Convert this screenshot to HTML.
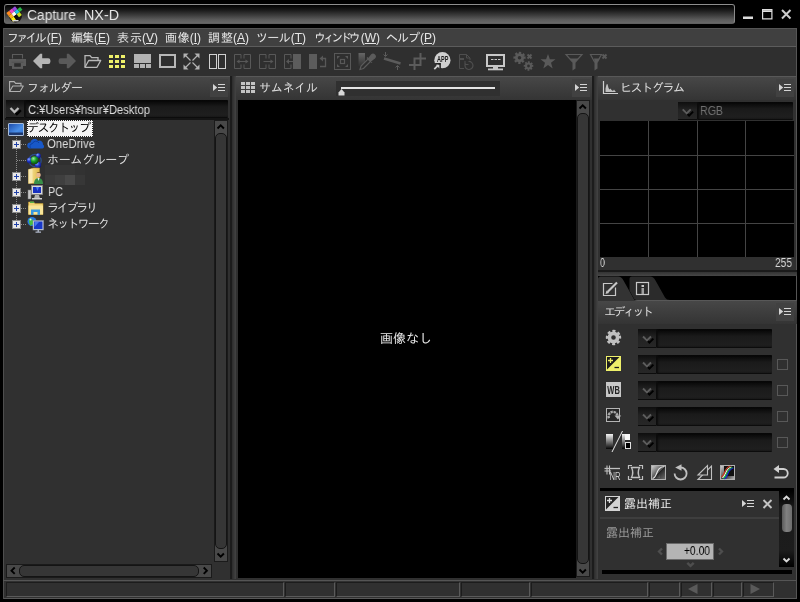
<!DOCTYPE html>
<html lang="ja"><head><meta charset="utf-8"><title>Capture NX-D</title>
<style>
*{box-sizing:border-box;margin:0;padding:0}
html,body{width:800px;height:602px;overflow:hidden;background:#000}
body{position:relative;font-family:"Liberation Sans","IPAGothic","Noto Sans CJK JP",sans-serif;font-size:12px;color:#dcdcdc;line-height:12px}
.a{position:absolute}
.t{position:absolute;white-space:nowrap;will-change:transform}
.j{letter-spacing:-2px}
u{text-decoration:underline;text-underline-offset:1px}
#title{left:4px;top:4px;width:731px;height:20px;border-radius:3px;border:1px solid #606060;border-top-color:#8e8e8e;border-left-color:#707070;border-right-color:#8a8a8a;background:linear-gradient(#000 0%,#161616 25%,#3a3a3a 55%,#5a5a5a 80%,#686868 100%)}
#menubar{left:3px;top:28px;width:794px;height:19px;background:#404040;border-top:1px solid #555;border-bottom:1px solid #5c5c5c}
#toolbar{left:3px;top:47px;width:794px;height:29px;background:#2f2f2f}
.hdr{background:linear-gradient(#474747 0%,#343434 100%);border-top:1px solid #585858}
.panel{background:#303030}
.mbtn{width:18px;height:18px;background:#414141}
.combo{background:linear-gradient(#040404 0%,#1a1a1a 40%,#202020 100%);border-radius:1px;border-bottom:1px solid #0c0c0c;box-shadow:inset 2px 0 2px #0c0c0c}
.chev{background:linear-gradient(#0e0e0e 0%,#222 45%,#272727 100%);border-bottom:1px solid #0c0c0c}
.sbv{width:14px;background:#2c2c2c;border:1px solid #1a1a1a}
.sbv i,.sbh i{position:absolute;display:block}
.sbv .up,.sbv .dn{left:0;width:12px;height:17px;background:#484848}
.sbv .up{top:0}.sbv .dn{bottom:0}
.sbv .th{left:0;width:12px;border:1px solid #141414;border-radius:5px;background:#363636}
.sbh{height:14px;background:#2c2c2c;border:1px solid #1a1a1a}
.sbh .lf,.sbh .rt{top:0;height:12px;width:17px;background:#484848}
.sbh .lf{left:0}.sbh .rt{right:0}
.sbh .th{top:0;height:12px;border:1px solid #141414;border-radius:5px;background:#363636}
.cb{width:11px;height:11px;border:1px solid #585858}
.sc{top:582px;height:15px;background:#303030;border-left:1px solid #1c1c1c;border-top:1px solid #1c1c1c;border-bottom:1px solid #5a5a5a;border-right:1px solid #5a5a5a}
</style></head><body>
<!-- TITLE -->
<div class="a" id="title"></div>
<!-- MENU -->
<div class="a" id="menubar"></div>
<!-- TOOLBAR -->
<div class="a" id="toolbar"></div>
<!-- LEFT PANEL -->
<div class="a panel" style="left:3px;top:76px;width:227px;height:503px"></div>
<div class="a hdr" style="left:3px;top:76px;width:227px;height:24px"></div>
<div class="a mbtn" style="left:210px;top:79px"></div>
<!-- splitter L -->
<div class="a" style="left:230px;top:76px;width:6px;height:503px;background:linear-gradient(90deg,#1c1c1c 0,#1c1c1c 2px,#2c2c2c 2px,#444 100%)"></div>
<!-- CENTER PANEL -->
<div class="a panel" style="left:236px;top:76px;width:356px;height:503px"></div>
<div class="a hdr" style="left:236px;top:76px;width:356px;height:24px"></div>
<div class="a mbtn" style="left:572px;top:79px"></div>
<div class="a" style="left:238px;top:100px;width:338px;height:478px;background:#000"></div>
<!-- splitter R -->
<div class="a" style="left:592px;top:76px;width:6px;height:503px;background:linear-gradient(90deg,#1c1c1c 0,#1c1c1c 2px,#2c2c2c 2px,#444 100%)"></div>
<!-- RIGHT PANEL -->
<div class="a panel" style="left:598px;top:76px;width:199px;height:503px"></div>
<div class="a hdr" style="left:598px;top:76px;width:199px;height:24px"></div>
<div class="a mbtn" style="left:776px;top:79px"></div>
<!-- STATUS -->
<div class="a" id="status" style="left:3px;top:579px;width:794px;height:20px;background:#303030;border-bottom:1px solid #585858"></div>
<div class="a" style="left:3px;top:28px;width:1px;height:571px;background:#4e4e4e"></div>
<div class="a" style="left:796px;top:28px;width:1px;height:571px;background:#555"></div>
<!-- LEFT CONTENT -->
<div class="a" style="left:5px;top:118px;width:224px;height:2px;background:#151515"></div>
<div class="a chev" style="left:6px;top:100px;width:18px;height:18px"></div>
<div class="a combo" style="left:24px;top:100px;width:204px;height:18px"></div>
<!-- selected item -->
<div class="a" style="left:27px;top:120px;width:66px;height:17px;background:#f4f4f4;border:1px dotted #222"></div>
<!-- blurred name -->
<div class="a" style="left:45px;top:165px;width:30px;height:10px;background:#353535"></div>
<div class="a" style="left:75px;top:165px;width:10px;height:10px;background:#323232"></div>
<div class="a" style="left:45px;top:175px;width:10px;height:10px;background:#3a3a3a"></div>
<div class="a" style="left:55px;top:175px;width:10px;height:10px;background:#3f3f3f"></div>
<div class="a" style="left:65px;top:175px;width:10px;height:10px;background:#484848"></div>
<div class="a" style="left:75px;top:175px;width:10px;height:10px;background:#373737"></div>
<!-- v scroll left -->
<div class="a sbv" style="left:214px;top:120px;height:442px"><i class="up"></i><i class="dn"></i><i class="th" style="top:12px;bottom:12px"></i></div>
<!-- h scroll left -->
<div class="a sbh" style="left:6px;top:564px;width:206px"><i class="lf"></i><i class="rt"></i><i class="th" style="left:12px;right:12px"></i></div>
<!-- CENTER CONTENT -->
<div class="a" style="left:336px;top:81px;width:164px;height:15px;background:#303030"></div>
<div class="a" style="left:341px;top:87px;width:154px;height:2px;background:#e4e4e4"></div>
<div class="a sbv" style="left:576px;top:100px;height:477px"><i class="up"></i><i class="dn"></i><i class="th" style="top:12px;bottom:12px"></i></div>
<!-- STATUS CELLS -->
<div class="a" style="left:3px;top:580px;width:794px;height:1px;background:#555"></div>
<div class="a sc" style="left:6px;width:278px"></div>
<div class="a sc" style="left:285px;width:50px"></div>
<div class="a sc" style="left:336px;width:124px"></div>
<div class="a sc" style="left:461px;width:69px"></div>
<div class="a sc" style="left:531px;width:117px"></div>
<div class="a sc" style="left:649px;width:31px"></div>
<div class="a sc" style="left:681px;width:31px"></div>
<div class="a sc" style="left:713px;width:29px"></div>
<div class="a sc" style="left:743px;width:31px"></div>
<!-- RIGHT CONTENT -->
<div class="a chev" style="left:678px;top:102px;width:19px;height:18px"></div>
<div class="a combo" style="left:697px;top:102px;width:96px;height:18px"></div>
<!-- histogram -->
<div class="a" style="left:600px;top:121px;width:194px;height:136px;background:#000"></div>
<div class="a" style="left:648px;top:121px;width:1px;height:136px;background:#444"></div>
<div class="a" style="left:697px;top:121px;width:1px;height:136px;background:#444"></div>
<div class="a" style="left:745px;top:121px;width:1px;height:136px;background:#444"></div>
<div class="a" style="left:600px;top:155px;width:194px;height:1px;background:#444"></div>
<div class="a" style="left:600px;top:189px;width:194px;height:1px;background:#444"></div>
<div class="a" style="left:600px;top:223px;width:194px;height:1px;background:#444"></div>
<!-- h-splitter -->
<div class="a" style="left:598px;top:270px;width:199px;height:6px;background:linear-gradient(#1a1a1a 0,#1a1a1a 33%,#333 34%,#464646 100%)"></div>
<!-- tab strip -->
<div class="a" style="left:598px;top:276px;width:198px;height:25px;background:#000"></div>
<!-- edit header -->
<div class="a hdr" style="left:598px;top:300px;width:199px;height:24px"></div>
<div class="a mbtn" style="left:776px;top:303px"></div>
<!-- edit rows -->
<div class="a chev" style="left:638px;width:18px;height:19px;top:329px"></div><div class="a combo" style="left:656px;top:329px;width:116px;height:19px"></div>
<div class="a chev" style="left:638px;width:18px;height:19px;top:355px"></div><div class="a combo" style="left:656px;top:355px;width:116px;height:19px"></div>
<div class="a chev" style="left:638px;width:18px;height:19px;top:381px"></div><div class="a combo" style="left:656px;top:381px;width:116px;height:19px"></div>
<div class="a chev" style="left:638px;width:18px;height:19px;top:407px"></div><div class="a combo" style="left:656px;top:407px;width:116px;height:19px"></div>
<div class="a chev" style="left:638px;width:18px;height:19px;top:433px"></div><div class="a combo" style="left:656px;top:433px;width:116px;height:19px"></div>
<div class="a cb" style="left:777px;top:359px"></div>
<div class="a cb" style="left:777px;top:385px"></div>
<div class="a cb" style="left:777px;top:411px"></div>
<div class="a cb" style="left:777px;top:437px"></div>
<!-- exposure panel -->
<div class="a" style="left:600px;top:488px;width:194px;height:3px;background:#000"></div>
<div class="a" style="left:600px;top:517px;width:179px;height:2px;background:#3e3e3e"></div>
<div class="a" style="left:779px;top:491px;width:15px;height:76px;background:linear-gradient(#000 0%,#1a1a1a 22%,#1c1c1c 78%,#000 100%)"></div>
<div class="a" style="left:782px;top:504px;width:10px;height:28px;border-radius:4px;background:linear-gradient(90deg,#5a5a5a,#808080 45%,#6e6e6e)"></div>
<div class="a" style="left:602px;top:570px;width:190px;height:4px;background:#000"></div>
<div class="a" style="left:666px;top:543px;width:48px;height:17px;background:#b4b4b4;border:1px solid #6a6a6a"></div>
<!-- TEXT -->
<div class="t" id="t0" style="left:27px;top:8px;font-size:14px;color:#e4e4e4;line-height:14px;transform:scaleX(0.984);transform-origin:0 0;">Capture</div>
<div class="t" id="t1" style="left:84px;top:8px;font-size:14px;color:#e4e4e4;line-height:14px;transform:scaleX(1.022);transform-origin:0 0;">NX-D</div>
<div class="t" id="t2" style="left:7px;top:32px;font-size:12px;color:#e6e6e6;line-height:12px;"><span style="letter-spacing:-2.78px">ファイ</span>ル(<u>F</u>)</div>
<div class="t" id="t3" style="left:71px;top:32px;font-size:12px;color:#e6e6e6;line-height:12px;"><span style="letter-spacing:-1.02px">編</span>集(<u>E</u>)</div>
<div class="t" id="t4" style="left:117px;top:32px;font-size:12px;color:#e6e6e6;line-height:12px;"><span style="letter-spacing:0.98px">表</span>示(<u>V</u>)</div>
<div class="t" id="t5" style="left:165px;top:32px;font-size:12px;color:#e6e6e6;line-height:12px;"><span style="letter-spacing:0.66px">画</span>像(<u>I</u>)</div>
<div class="t" id="t6" style="left:208px;top:32px;font-size:12px;color:#e6e6e6;line-height:12px;"><span style="letter-spacing:0.98px">調</span>整(<u>A</u>)</div>
<div class="t" id="t7" style="left:256px;top:32px;font-size:12px;color:#e6e6e6;line-height:12px;"><span style="letter-spacing:-0.67px">ツー</span>ル(<u>T</u>)</div>
<div class="t" id="t8" style="left:314px;top:32px;font-size:12px;color:#e6e6e6;line-height:12px;"><span style="letter-spacing:-3.33px">ウィンド</span>ウ(<u>W</u>)</div>
<div class="t" id="t9" style="left:386px;top:32px;font-size:12px;color:#e6e6e6;line-height:12px;"><span style="letter-spacing:-1.01px">ヘル</span>プ(<u>P</u>)</div>
<div class="t" id="t10" style="left:27px;top:82px;font-size:12px;color:#dcdcdc;line-height:12px;"><span style="letter-spacing:-1.00px">フォルダ</span>ー</div>
<div class="t" id="t11" style="left:28px;top:103px;font-size:13px;color:#dcdcdc;line-height:13px;transform:scaleX(0.861);transform-origin:0 0;">C:¥Users¥hsur¥Desktop</div>
<div class="t" id="t12" style="left:27px;top:122px;font-size:12px;color:#000;line-height:12px;"><span style="letter-spacing:-1.60px">デスクトッ</span>プ</div>
<div class="t" id="t13" style="left:47px;top:137px;font-size:13px;color:#dcdcdc;line-height:13px;transform:scaleX(0.874);transform-origin:0 0;">OneDrive</div>
<div class="t" id="t14" style="left:47px;top:154px;font-size:12px;color:#dcdcdc;line-height:12px;"><span style="letter-spacing:-0.33px">ホームグルー</span>プ</div>
<div class="t" id="t15" style="left:48px;top:185px;font-size:13px;color:#dcdcdc;line-height:13px;transform:scaleX(0.830);transform-origin:0 0;">PC</div>
<div class="t" id="t16" style="left:47px;top:202px;font-size:12px;color:#dcdcdc;line-height:12px;"><span style="letter-spacing:-2.25px">ライブラ</span>リ</div>
<div class="t" id="t17" style="left:47px;top:218px;font-size:12px;color:#dcdcdc;line-height:12px;"><span style="letter-spacing:-1.80px">ネットワー</span>ク</div>
<div class="t" id="t18" style="left:259px;top:82px;font-size:12px;color:#dcdcdc;line-height:12px;"><span style="letter-spacing:-0.25px">サムネイ</span>ル</div>
<div class="t" id="t19" style="left:380px;top:332px;font-size:13px;color:#e8e8e8;line-height:13px;"><span style="letter-spacing:0.00px">画像な</span>し</div>
<div class="t" id="t20" style="left:620px;top:82px;font-size:12px;color:#dcdcdc;line-height:12px;"><span style="letter-spacing:-1.40px">ヒストグラ</span>ム</div>
<div class="t" id="t21" style="left:700px;top:104px;font-size:13px;color:#707070;line-height:13px;transform:scaleX(0.816);transform-origin:0 0;">RGB</div>
<div class="t" id="t22" style="left:600px;top:256px;font-size:13px;color:#d8d8d8;line-height:13px;transform:scaleX(0.691);transform-origin:0 0;">0</div>
<div class="t" id="t23" style="left:775px;top:256px;font-size:13px;color:#d8d8d8;line-height:13px;transform:scaleX(0.783);transform-origin:0 0;">255</div>
<div class="t" id="t24" style="left:604px;top:306px;font-size:12px;color:#dcdcdc;line-height:12px;"><span style="letter-spacing:-2.50px">エディッ</span>ト</div>
<div class="t" id="t25" style="left:624px;top:498px;font-size:12px;color:#e8e8e8;line-height:12px;"><span style="letter-spacing:0.00px">露出補</span>正</div>
<div class="t" id="t26" style="left:606px;top:527px;font-size:12px;color:#9a9a9a;line-height:12px;"><span style="letter-spacing:0.00px">露出補</span>正</div>
<div class="t" id="t27" style="left:684px;top:544px;font-size:13px;color:#000;line-height:13px;transform:scaleX(0.790);transform-origin:0 0;">+0.00</div>
<!-- ICON OVERLAY: toolbar -->
<svg class="a" style="left:0;top:0" width="800" height="602" viewBox="0 0 800 602">
<!-- app icon -->
<g>
<circle cx="15.5" cy="16" r="6.5" fill="#1a1413"/>
<g transform="translate(14.800,13.300) rotate(-38) scale(1.080)">
<rect x="-6" y="-5" width="3.4" height="3.4" fill="#ff8a1e"/><rect x="-2.6" y="-5" width="3.4" height="3.4" fill="#f048c8"/><rect x="0.8" y="-5" width="3.4" height="3.4" fill="#9a4ae0"/>
<rect x="-6" y="-1.6" width="3.4" height="3.4" fill="#ffb020"/><rect x="-2.6" y="-1.6" width="3.4" height="3.4" fill="#ffffff"/><rect x="0.8" y="-1.6" width="3.4" height="3.4" fill="#20c8e8"/>
<rect x="-6" y="1.8" width="3.4" height="3.4" fill="#f8f010"/><rect x="-2.6" y="1.8" width="3.4" height="3.4" fill="#101010"/><rect x="0.8" y="1.8" width="3.4" height="3.4" fill="#c8e020"/>
<rect x="4.2" y="-1.6" width="3.4" height="3.4" fill="#28b848"/>
</g>
<rect x="12.5" y="20" width="6" height="1.4" fill="#d8d8d8"/>
</g>
<!-- window controls -->
<rect x="743" y="16.500" width="10" height="2.500" fill="#dcdcdc"/>
<path d="M762,9h10.500v10.500h-10.500z M763.200,12v6.300h8.100v-6.300z" fill="#dcdcdc" fill-rule="evenodd"/><rect x="763" y="10.300" width="8.500" height="0.600" fill="#999"/>
<path d="M782,10l8.500,8.500M790.500,10l-8.500,8.500" stroke="#cccccc" stroke-width="2" fill="none"/>
<!-- printer -->
<path d="M12.500,58.500v-4h10v4" fill="none" stroke="#5c5c5c" stroke-width="1.100"/><rect x="9" y="59" width="17" height="7" fill="#5c5c5c"/><rect x="12" y="62.300" width="11" height="6.600" fill="#5c5c5c"/><rect x="11.500" y="61.800" width="12" height="0.600" fill="#4a4a4a"/><rect x="14.200" y="63.200" width="6.600" height="3.600" fill="#2c2c2c"/>
<!-- back / forward -->
<path d="M33,61l7.200,-7.300h2v4.500h6a2.200,2.200 0 0 1 2.200,2.200v1.300a2.200,2.200 0 0 1 -2.200,2.200h-6v4.400h-2z" fill="#b4b4b4"/>
<path d="M76,61l-7.200,-7.300h-2v4.500h-6a2.200,2.200 0 0 0 -2.200,2.200v1.300a2.200,2.200 0 0 0 2.200,2.200h6v4.400h2z" fill="#5a5a5a"/>
<!-- folder open -->
<path d="M85,67.300V55.700h5l1.700,2h6.300v3" fill="none" stroke="#b8b8b8" stroke-width="1.3"/>
<path d="M85,67.300l3.700,-6.800h12l-3.700,6.800z" fill="none" stroke="#b8b8b8" stroke-width="1.3" stroke-linejoin="round"/>
<!-- grid 3x3 -->
<g fill="#eef06a"><rect x="109" y="55" width="4" height="3"/><rect x="115" y="55" width="4" height="3"/><rect x="121" y="55" width="4" height="3"/><rect x="109" y="60" width="4" height="3"/><rect x="115" y="60" width="4" height="3"/><rect x="121" y="60" width="4" height="3"/><rect x="109" y="65" width="4" height="3"/><rect x="115" y="65" width="4" height="3"/><rect x="121" y="65" width="4" height="3"/></g>
<!-- filmstrip -->
<g fill="#b2b2b2"><rect x="134" y="54" width="17" height="9"/><rect x="134" y="64" width="5" height="4"/><rect x="140" y="64" width="5" height="4"/><rect x="146" y="64" width="5" height="4"/></g>
<!-- single -->
<rect x="160" y="55" width="15" height="12" fill="none" stroke="#b8b8b8" stroke-width="2"/>
<!-- fullscreen -->
<g fill="#b2b2b2" stroke="#b2b2b2" stroke-width="1.2"><path d="M185.500,55.500l5,5M197.500,55.500l-5,5M185.500,67.500l5,-5M197.500,67.500l-5,-5" fill="none"/><path d="M183.500,53.500h5l-5,5z" stroke="none"/><path d="M199.500,53.500h-5l5,5z" stroke="none"/><path d="M183.500,69.500h5l-5,-5z" stroke="none"/><path d="M199.500,69.500h-5l5,-5z" stroke="none"/></g>
<!-- compare -->
<rect x="209.500" y="54.500" width="7" height="14" fill="none" stroke="#d0d0d0"/><rect x="218.500" y="54.500" width="7" height="14" fill="none" stroke="#d0d0d0"/>
<!-- disabled: 2 boxes w/ double arrow -->
<g fill="none" stroke="#585858" stroke-width="1"><path d="M241,54.500h-6.500v14h6.500v-4M241,54.500v4M244,54.500h6.500v14h-6.500v-4M244,54.500v4"/><path d="M237.500,61.500h10"/></g>
<path d="M236.500,61.500l3,-2v4zM248.500,61.500l-3,-2v4z" fill="#585858"/>
<g fill="none" stroke="#585858" stroke-width="1"><path d="M266,54.500h-6.500v14h6.500v-4M266,54.500v4M269,54.500h6.500v14h-6.500v-4M269,54.500v4"/><path d="M263.500,61.500h8"/></g>
<path d="M273.500,61.500l-3,-2v4z" fill="#585858"/>
<!-- arrow into filled -->
<path d="M291,54.500h-6.500v14h6.500v-4M291,54.500v4" fill="none" stroke="#585858"/><rect x="293" y="54" width="8" height="15" fill="#5c5c5c"/><path d="M287.500,61.500h6" stroke="#585858"/><path d="M286,61.500l3,-2.500v5z" fill="#585858"/>
<!-- filled + return arrow -->
<rect x="309" y="54" width="8" height="15" fill="#5c5c5c"/><path d="M320,66.500h5.500v-8h-3" fill="none" stroke="#585858" stroke-width="1.3"/><path d="M319.500,58.500l3.500,-3v6z" fill="#585858"/>
<!-- focus box -->
<rect x="334.500" y="53.500" width="16" height="16" fill="none" stroke="#585858"/><rect x="340.500" y="59.500" width="4" height="4" fill="none" stroke="#585858" stroke-width="1.2"/>
<path d="M337,59v-3h3zM348,59v-3h-3zM337,64v3h3zM348,64v3h-3z" fill="#585858"/>
<!-- eyedropper -->
<defs><linearGradient id="gd" x1="0" y1="0" x2="0" y2="1"><stop offset="0" stop-color="#666"/><stop offset="1" stop-color="#333"/></linearGradient></defs>
<rect x="358.500" y="53" width="6.500" height="13" fill="url(#gd)"/>
<path d="M360,69.500l1,-3.500l7,-7l2.500,2.500l-7,7z" fill="#2f2f2f" stroke="#5c5c5c" stroke-width="1.2"/><path d="M367,57.500l5,5M368.500,59l3,-4a2,2 0 0 1 3,3l-4,3z" fill="#5c5c5c" stroke="#5c5c5c" stroke-width="1.4"/>
<!-- straighten -->
<path d="M384,58.500l16.500,5" stroke="#5c5c5c" stroke-width="2.400" fill="none"/><path d="M385.500,52v4M383.500,54.500l2,2l2,-2M397.500,70v-4M395.500,67.500l2,-2l2,2" stroke="#5c5c5c" stroke-width="1" fill="none"/>
<!-- crop -->
<path d="M420.500,53V65H409M426,58.500H414.500V70" stroke="#5c5c5c" stroke-width="2" fill="none"/>
<!-- APP -->
<circle cx="442.400" cy="60.200" r="8.100" fill="#d0d0d0"/><rect x="433" y="63.200" width="7.600" height="8" fill="#2f2f2f"/><rect x="435.500" y="63.200" width="5.100" height="1.300" fill="#1a1a1a"/><rect x="439.300" y="63.200" width="1.300" height="5" fill="#1a1a1a"/>
<text x="437" y="62" font-family="Liberation Sans, sans-serif" font-weight="bold" font-size="8.400" fill="#1c1c1c" textLength="11.300" lengthAdjust="spacingAndGlyphs">APP</text>
<path d="M434.300,69.200l4,-4" stroke="#d0d0d0" stroke-width="1.700"/><path d="M435.800,64.800h3.600v3.600z" fill="#d0d0d0"/>
<!-- file revert -->
<path d="M464,68.500h-4.500v-14h7l3.500,3.500v2M466.500,54.500v3.500h3.500" fill="none" stroke="#4e4e4e"/><path d="M460,59h4" stroke="#4e4e4e" stroke-width="2"/><path d="M465.500,63.500a4,4 0 1 0 3,-2" fill="none" stroke="#4e4e4e" stroke-width="1.200"/><path d="M465,61v3.500h3.500" fill="none" stroke="#4e4e4e"/>
<!-- monitor -->
<rect x="487" y="55" width="17" height="11" fill="none" stroke="#c8c8c8" stroke-width="2"/><rect x="493" y="67" width="5" height="2" fill="#c8c8c8"/><rect x="488" y="68.500" width="15" height="1.800" fill="#c8c8c8"/><path d="M491,59.500h2.500M494.500,59.500h2.500M498,59.500h2.500" stroke="#c8c8c8" stroke-width="1"/>
<!-- gears -->
<g fill="none" stroke="#5a5a5a"><circle cx="519.500" cy="57.800" r="3.200" stroke-width="2.800"/><circle cx="519.500" cy="57.800" r="5" stroke-width="2.200" stroke-dasharray="2.200 1.727" transform="rotate(-14 519.500 57.800)"/><circle cx="528.500" cy="66" r="2.500" stroke-width="2.200"/><circle cx="528.500" cy="66" r="3.900" stroke-width="1.800" stroke-dasharray="1.700 1.363" transform="rotate(-14 528.500 66)"/><path d="M527.500,54.500l4,4M531.500,54.500l-4,4" stroke-width="2"/></g>
<!-- star -->
<path d="M548,54l1.900,5.300h5.600l-4.500,3.500l1.700,5.600l-4.700,-3.300l-4.700,3.300l1.700,-5.600l-4.500,-3.500h5.600z" fill="#5a5a5a"/>
<!-- filter -->
<path d="M566,54.500h16l-6.500,7.500h-3z" fill="none" stroke="#5a5a5a" stroke-width="1.200"/><path d="M569.500,58.500h9l-3,3.500v6.500l-3,2v-8.500z" fill="#5a5a5a"/>
<path d="M590.500,54.500h11l-2,3.500l-2,4h-3z" fill="none" stroke="#5a5a5a" stroke-width="1.200"/><path d="M594,58.500h6l-2.500,3.500v6.500l-3,2v-8.500z" fill="#5a5a5a"/><path d="M602.500,54.500l4,4M606.500,54.500l-4,4" stroke="#5a5a5a" stroke-width="2"/>
</svg>
<!-- ICON OVERLAY: panels -->
<svg class="a" style="left:0;top:0" width="800" height="602" viewBox="0 0 800 602">
<defs>
<g id="mi"><path d="M0,0l4.200,3.500l-4.200,3.500z"/><rect x="5" y="0" width="7" height="1"/><rect x="5" y="3" width="7" height="1"/><rect x="5" y="6" width="7" height="1"/></g>
<g id="cv"><path d="M0.500,0l4,4l4,-4" fill="none"/></g>
<g id="cvd" stroke-width="1.900"><use href="#cv" x="2.400" y="2.200" stroke="#000"/><use href="#cv" stroke="#5c5c5c"/></g>
<g id="cvl" stroke-width="2.300"><use href="#cv" x="2.400" y="2.200" stroke="#000"/><use href="#cv" stroke="#b8b8b8"/></g>
<g id="ex"><rect x="0.500" y="0.500" width="14" height="14" rx="0.500" fill="none" stroke="#000"/><path d="M1,1h13l-13,13z" fill="#1a1a1a"/><path d="M2.500,4.500h5M5,2v5M8.500,11.500h4.500" stroke-width="1.300"/></g>
<g id="pl"><rect x="0.500" y="0.500" width="8" height="8" fill="#e8e8e8" stroke="#8a8a8a"/><path d="M2,4.500h5M4.500,2v5" stroke="#2040a8" stroke-width="1"/></g>
<linearGradient id="gbl" x1="0" y1="0" x2="1" y2="1"><stop offset="0" stop-color="#1a48a8"/><stop offset="0.600" stop-color="#4a90e8"/><stop offset="1" stop-color="#2a68d0"/></linearGradient>
<linearGradient id="gwb" x1="0" y1="0" x2="0" y2="1"><stop offset="0" stop-color="#f4f4f4"/><stop offset="1" stop-color="#050505"/></linearGradient>
<linearGradient id="gcv" x1="0" y1="0" x2="1" y2="1"><stop offset="0" stop-color="#d8d8d8"/><stop offset="0.500" stop-color="#505050"/><stop offset="0.520" stop-color="#1a1a1a"/><stop offset="1" stop-color="#c0c0c0"/></linearGradient>
<linearGradient id="gfo" x1="0" y1="0" x2="1" y2="0"><stop offset="0" stop-color="#f8e8a0"/><stop offset="1" stop-color="#e0b848"/></linearGradient>
<radialGradient id="gsb" cx="0.350" cy="0.300" r="0.700"><stop offset="0" stop-color="#8aa8ff"/><stop offset="0.500" stop-color="#2038c8"/><stop offset="1" stop-color="#101878"/></radialGradient>
<radialGradient id="gsg" cx="0.350" cy="0.300" r="0.700"><stop offset="0" stop-color="#a0f0a0"/><stop offset="0.500" stop-color="#18a028"/><stop offset="1" stop-color="#0a5010"/></radialGradient>
</defs>
<!-- panel header icons -->
<path d="M9.600,91.500V81.600h4.500l1.600,1.800h5.300v2.600" fill="none" stroke="#b0b0b0" stroke-width="1.100"/>
<path d="M9.600,91.500l3.200,-5.500h10.500l-3.200,5.500z" fill="none" stroke="#b0b0b0" stroke-width="1.100" stroke-linejoin="round"/>
<g fill="#c4c4c4"><rect x="241" y="82" width="4" height="3"/><rect x="246" y="82" width="4" height="3"/><rect x="251" y="82" width="4" height="3"/><rect x="241" y="86" width="4" height="3"/><rect x="246" y="86" width="4" height="3"/><rect x="251" y="86" width="4" height="3"/><rect x="241" y="90" width="4" height="3"/><rect x="246" y="90" width="4" height="3"/><rect x="251" y="90" width="4" height="3"/></g>
<path d="M603.500,81v12.500h14.500" fill="none" stroke="#d0d0d0" stroke-width="1.200"/><path d="M605.500,92v-3.500l1,-4l1,-0.500l1,4l1,1.500l1,-1l1,1.500l1.500,1l1,-1.500l1,1.500l1,1z" fill="#c0c0c0"/>
<g fill="#d4d4d4"><use href="#mi" x="213" y="84"/><use href="#mi" x="575" y="84"/><use href="#mi" x="779" y="84"/><use href="#mi" x="779" y="308"/><use href="#mi" x="742" y="500"/></g>
<!-- slider thumb -->
<path d="M338.500,95.500v-3l3,-3.500l3,3.500v3z" fill="#d8d8d8"/>
<!-- chevrons -->
<use href="#cvl" x="10" y="108"/>
<use href="#cvd" x="682.200" y="109.400"/>
<use href="#cvd" x="642.500" y="336.500"/><use href="#cvd" x="642.500" y="362.500"/><use href="#cvd" x="642.500" y="388.500"/><use href="#cvd" x="642.500" y="414.500"/><use href="#cvd" x="642.500" y="440.500"/>
<!-- scrollbar arrows -->
<g fill="none" stroke="#000" stroke-width="1.900">
<path d="M217.500,128.500l3.200,-3.200l3.200,3.200M217.500,553.500l3.200,3.200l3.200,-3.200"/>
<path d="M579.500,108.500l3.200,-3.200l3.200,3.200M579.500,569.500l3.200,3.200l3.200,-3.200"/>
<path d="M14.700,567.500l-3.200,3.200l3.200,3.200M203.700,567.500l3.200,3.200l-3.200,3.200"/>
</g>
<g fill="none" stroke="#d8d8d8" stroke-width="1.900"><path d="M783.500,499.500l3,-3l3,3M783.500,558.500l3,3l3,-3"/></g>
<!-- tree lines -->
<g stroke="#8a8a8a" stroke-width="1" stroke-dasharray="1 1" fill="none">
<path d="M16.500,137v88"/><path d="M21,144.500h6"/><path d="M17,160.500h10"/><path d="M21,176.500h6"/><path d="M21,192.500h6"/><path d="M21,208.500h6"/><path d="M21,224.500h6"/><path d="M4,128.500h4"/>
</g>
<use href="#pl" x="12" y="140"/><use href="#pl" x="12" y="172"/><use href="#pl" x="12" y="188"/><use href="#pl" x="12" y="204"/><use href="#pl" x="12" y="220"/>
<!-- desktop icon -->
<rect x="8.500" y="123.500" width="15" height="12" rx="0.500" fill="url(#gbl)" stroke="#a8bcd8"/><rect x="9" y="132.500" width="14" height="2.500" fill="#1c3870"/>
<!-- onedrive -->
<path d="M30,148.500a3,3 0 0 1 0.500,-6a4,4 0 0 1 7.500,-1.500a3.500,3.500 0 0 1 5,3.500a2.200,2.200 0 0 1 -0.500,4z" fill="#1858c8"/><path d="M31,148.500a2.800,2.800 0 0 1 1.500,-5a3.600,3.600 0 0 1 6.500,-0.500" fill="none" stroke="#0a3a98" stroke-width="0.800"/>
<!-- homegroup -->
<circle cx="35" cy="160.500" r="6.200" fill="none" stroke="#2a58a8" stroke-width="1.300" opacity="0.750"/>
<circle cx="38.300" cy="155.800" r="2.600" fill="url(#gsb)"/><circle cx="29.800" cy="160.500" r="3" fill="url(#gsb)"/><circle cx="38" cy="165" r="3.200" fill="url(#gsb)"/><circle cx="34.600" cy="160.200" r="3.900" fill="url(#gsg)"/>
<!-- user folder -->
<path d="M28.500,183.500v-14l5,-1.500h6v15.500z" fill="url(#gfo)" stroke="#b89030" stroke-width="0.600"/><path d="M28.500,169.500l4,-1v14.500l-4,0.500z" fill="#f8e8b0"/>
<circle cx="38.500" cy="175" r="2.300" fill="#e8b890"/><path d="M36.200,174.500a2.300,2.300 0 0 1 4.600,0l-0.500,-1.500h-3.600z" fill="#503010"/><path d="M34,184c0,-4 2,-6 4.500,-6s4.500,2 4.500,6z" fill="#389048"/><path d="M37.500,178l1,3l1,-3z" fill="#f0f0f0"/>
<!-- PC -->
<rect x="28" y="190" width="3" height="9" fill="#c8c8c8" stroke="#787878" stroke-width="0.500"/><rect x="31.500" y="185.500" width="11" height="9" fill="#d8d8d8" stroke="#888" stroke-width="0.800"/><rect x="33" y="187" width="8" height="6" fill="#1830c0"/><path d="M36,187h3l-1.500,4z" fill="#4878f0"/><path d="M34,198.500h6l-1,-3.500h-4z" fill="#b0b0b0"/><rect x="32" y="198" width="10" height="1.500" fill="#d0d0d0"/>
<!-- library -->
<path d="M28.500,214.500v-12.500h5l1.500,1.500h8v11z" fill="#f0d070" stroke="#c09830" stroke-width="0.600"/><path d="M28.500,205.500h14.500v9h-14.500z" fill="#f8e498"/><path d="M31,215v-5.500h9v5.500h-2.500v-3h-4v3z" fill="#3898e0"/><rect x="30" y="201.500" width="4" height="1.500" fill="#58b048"/>
<!-- network -->
<circle cx="32" cy="221.500" r="4.500" fill="#2878e0"/><path d="M29,219.500c1.500,-2 3,-1 3.500,0.500s2,1 2,3s-2.500,1 -3.500,2.500s-1,-2 -2,-3z" fill="#48c040"/><circle cx="30.500" cy="219.500" r="1" fill="#c8f0ff"/>
<rect x="33" y="220.500" width="10.500" height="9.500" fill="#c8d0e0" stroke="#8890a0" stroke-width="0.600"/><rect x="34" y="221.500" width="8.500" height="7.500" fill="#1838c8"/><path d="M34.500,222h4.500l-4.500,5z" fill="#4878f0"/><rect x="37.500" y="230" width="1.500" height="2" fill="#a8b0c0"/><rect x="35.500" y="231.500" width="5.500" height="1.300" fill="#a8b0c0"/>
<!-- tabs -->
<path d="M598,301v-22q0,-2.500 2.500,-2.500h17.500q3.500,0 5.500,4l9.500,17q1.500,3.500 5,3.500z" fill="#333"/>
<path d="M632.500,296l-3,-5.500v-11.500q0,-2.500 2.500,-2.500h18q3.500,0 5.500,4l9.500,17q1.500,2.500 5,2.500h-34q-2.500,-1 -3.500,-4z" fill="#2b2b2b"/>
<path d="M612.500,283.500h-9v12h12v-8" fill="none" stroke="#c8c8c8" stroke-width="1.200"/><path d="M607.500,292l9.500,-9.500" stroke="#c8c8c8" stroke-width="2.200"/><path d="M605.500,294l1,-3.500l2.500,2.500z" fill="#c8c8c8"/>
<rect x="636.500" y="282.500" width="12" height="12" fill="none" stroke="#c8c8c8" stroke-width="1.200"/><rect x="641.500" y="285" width="2.500" height="2" fill="#c8c8c8"/><rect x="641.500" y="288" width="2.500" height="6" fill="#a0a0a0"/>
<!-- edit icons -->
<g fill="none" stroke="#c0c0c0"><circle cx="613.500" cy="337.500" r="4.100" stroke-width="3.600"/><circle cx="613.500" cy="337.500" r="6.500" stroke-width="2.400" stroke-dasharray="2.900 2.205" transform="rotate(-16 613.500 337.500)"/></g>
<rect x="606" y="356" width="15" height="15" fill="#eef06a"/><path d="M607,357h12.500l-12.500,12.500z" fill="#1c1c1c"/><path d="M608,360.500h5M610.500,358v5" stroke="#eef06a" stroke-width="1.300"/><path d="M614.500,367.500h4.500" stroke="#1c1c1c" stroke-width="1.300"/>
<rect x="606" y="382" width="15" height="15" fill="#c8c8c8"/><text x="607.300" y="394" font-family="Liberation Sans, sans-serif" font-weight="bold" font-size="10.500" fill="#222" textLength="12.500" lengthAdjust="spacingAndGlyphs">WB</text>
<rect x="606.500" y="408.500" width="13" height="13" fill="#262626" stroke="#b4b4b4"/><path d="M608.900,418.200a4.500,4.500 0 1 1 8.500,-2.800" fill="none" stroke="#a8a8a8" stroke-width="2.500" stroke-dasharray="2.400 0.700"/><path d="M614.500,415.600h6.700l-3.300,4z" fill="#b4b4b4"/>
<rect x="606" y="434" width="7" height="15" fill="url(#gwb)"/><path d="M622.500,431l-10.500,21" stroke="#e8e8e8" stroke-width="1"/><rect x="622" y="434" width="3" height="15" fill="url(#gwb)"/><rect x="625" y="434" width="5" height="6" fill="#f8f8f8"/><rect x="625.500" y="442.500" width="5" height="6" fill="#000" stroke="#e0e0e0"/>
<!-- tool row -->
<g stroke="#c0c0c0" fill="none"><path d="M607,465.500v9M609.500,465.500v9" stroke-width="1.100"/><path d="M604.500,468.500h15.500" stroke-width="1.300"/><path d="M604.500,471h6.500" stroke-width="1.100"/></g>
<text x="609.500" y="480" font-family="Liberation Sans, sans-serif" font-size="10" fill="#d0d0d0" textLength="11" lengthAdjust="spacingAndGlyphs">NR</text>
<g stroke="#c0c0c0" fill="none" stroke-width="1.200"><path d="M628.500,469v-3.500h3.500M639,465.500h3.500v3.500M628.500,476v3.500h3.500M639,479.500h3.500v-3.500"/><path d="M631.500,467.500h8q-2.500,5 0,10h-8q2.500,-5 0,-10z" stroke-width="1.400"/></g>
<rect x="651.500" y="465.500" width="14" height="14" fill="url(#gcv)" stroke="#b0b0b0"/><path d="M652.500,478.500c5,0 3,-12 12,-12" fill="none" stroke="#e8e8e8" stroke-width="1.100"/><path d="M652,479l8,-1v-6l5,-5v12z" fill="#303030" opacity="0.550"/>
<path d="M680.600,467.500a6,6 0 1 1 -6,6" fill="none" stroke="#c0c0c0" stroke-width="1.800"/><path d="M675.200,467.500l6.300,-3.200v6.400z" fill="#c0c0c0"/>
<g fill="#303030" stroke="#c0c0c0" stroke-width="1.100"><path d="M698,479.500l13.500,-13.500v13.500z"/><path d="M698,475l9.500,-9.500v9.500z"/></g>
<rect x="720.500" y="465.500" width="14" height="14" fill="url(#gcv)" stroke="#b0b0b0"/><rect x="724" y="466" width="10" height="10" fill="#101010"/>
<g fill="none" stroke-width="1.200"><path d="M721.500,477c4,-3 3,-10 9,-11" stroke="#d03818"/><path d="M722.500,478c4,-3 3,-10 9,-11" stroke="#f0f0f0"/><path d="M723.500,478.500c4,-3 3,-10 9,-11" stroke="#20c030"/><path d="M724.500,479c4,-3 3,-10 9,-11" stroke="#1828d8"/></g>
<path d="M777,469h6.500a4.200,4.200 0 0 1 0,8.500h-9" fill="none" stroke="#d0d0d0" stroke-width="1.800"/><path d="M773.500,469l5.500,-4v8z" fill="#d0d0d0"/>
<!-- exposure panel -->
<rect x="605" y="496" width="15" height="15" fill="#d4d4d4"/><path d="M606,497h12.500l-12.500,12.500z" fill="#262626"/><path d="M607,500.500h5M609.500,498v5" stroke="#e0e0e0" stroke-width="1.300"/><path d="M613.500,507.500h4.500" stroke="#222" stroke-width="1.300"/>
<path d="M763.500,500l8,8M771.500,500l-8,8" stroke="#c4c4c4" stroke-width="1.900"/>
<path d="M662,548.500l-3,3l3,3M719,548.500l3,3l-3,3" fill="none" stroke="#4e4e4e" stroke-width="2.300"/>
<path d="M687.300,562.800l3.200,3l3.200,-3" fill="none" stroke="#4e4e4e" stroke-width="2.500"/>
<!-- status arrows -->
<path d="M688,589l9.500,-5v10z" fill="#5a5a5a"/><path d="M760,589l-9.500,-5v10z" fill="#5a5a5a"/>
</svg>
</body></html>
